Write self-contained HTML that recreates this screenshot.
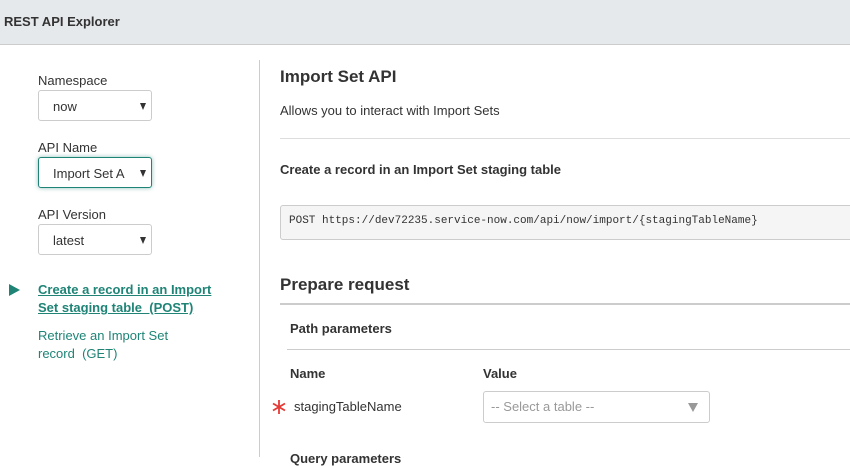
<!DOCTYPE html>
<html><head><meta charset="utf-8"><style>
*{margin:0;padding:0;box-sizing:border-box}
body{width:850px;height:457px;overflow:hidden;background:#fff;font-family:"Liberation Sans",Arial,sans-serif;color:#333;position:relative}
.a{position:absolute;white-space:nowrap}
.hdr{left:0;top:0;width:850px;height:45px;background:#e6e9ec;border-bottom:1px solid #ccc}
.lbl{font-size:13px;color:#333}
.sel{position:absolute;left:38px;width:114px;height:31px;border:1px solid #ccc;border-radius:3px;font-size:13px;padding:8px 0 0 14px;background:#fff}
.sel:after{content:"";position:absolute;right:5px;top:12px;border-left:3.5px solid transparent;border-right:3.5px solid transparent;border-top:7px solid #333}
.lnk{font-size:13px;color:#1f8476;line-height:18px}
</style></head><body>
<div class="a hdr"></div>
<div class="a" style="left:4px;top:14px;font-size:13px;font-weight:bold;color:#333">REST API Explorer</div>

<div class="a lbl" style="left:38px;top:73px">Namespace</div>
<div class="sel" style="top:90px">now</div>
<div class="a lbl" style="left:38px;top:140px">API Name</div>
<div class="sel" style="top:157px;border-color:#1f8476;box-shadow:0 0 4px rgba(31,132,118,.5)">Import Set A</div>
<div class="a lbl" style="left:38px;top:207px">API Version</div>
<div class="sel" style="top:224px">latest</div>

<div class="a" style="left:9px;top:284px;width:0;height:0;border-top:6px solid transparent;border-bottom:6px solid transparent;border-left:11px solid #1f8476"></div>
<div class="a lnk" style="left:38px;top:281px;font-weight:bold;text-decoration:underline">Create a record in an Import<br>Set staging table&nbsp; (POST)</div>
<div class="a lnk" style="left:38px;top:327px">Retrieve an Import Set<br>record&nbsp; (GET)</div>

<div class="a" style="left:259px;top:60px;width:1px;height:397px;background:#ccc"></div>

<div class="a" style="left:280px;top:67px;font-size:17px;font-weight:bold;color:#333">Import Set API</div>
<div class="a" style="left:280px;top:103px;font-size:13px">Allows you to interact with Import Sets</div>
<div class="a" style="left:280px;top:138px;width:570px;height:1px;background:#ddd"></div>
<div class="a" style="left:280px;top:162px;font-size:13px;font-weight:bold">Create a record in an Import Set staging table</div>
<div class="a" style="left:280px;top:205px;width:580px;height:35px;background:#f5f5f5;border:1px solid #ccc;border-radius:3px"></div>
<div class="a" style="left:289px;top:215px;font-family:'Liberation Mono',monospace;font-size:11px;color:#333">POST https://dev72235.service-now.com/api/now/import/{stagingTableName}</div>

<div class="a" style="left:280px;top:275px;font-size:17px;font-weight:bold">Prepare request</div>
<div class="a" style="left:280px;top:303px;width:570px;height:2px;background:#ccc"></div>
<div class="a" style="left:290px;top:321px;font-size:13px;font-weight:bold">Path parameters</div>
<div class="a" style="left:287px;top:349px;width:563px;height:1px;background:#ccc"></div>
<div class="a" style="left:290px;top:366px;font-size:13px;font-weight:bold">Name</div>
<div class="a" style="left:483px;top:366px;font-size:13px;font-weight:bold">Value</div>
<svg class="a" style="left:272px;top:400px" width="14" height="14" viewBox="0 0 14 14"><g stroke="#e53935" stroke-width="1.8"><line x1="7" y1="0" x2="7" y2="14"/><line x1="1" y1="3.5" x2="13" y2="10.5"/><line x1="1" y1="10.5" x2="13" y2="3.5"/></g></svg>
<div class="a" style="left:294px;top:399px;font-size:13px">stagingTableName</div>
<div class="a" style="left:483px;top:391px;width:227px;height:32px;border:1px solid #ccc;border-radius:3px;background:#fff"></div>
<div class="a" style="left:491px;top:399px;font-size:13px;color:#999">-- Select a table --</div>
<div class="a" style="left:688px;top:403px;width:0;height:0;border-left:5px solid transparent;border-right:5px solid transparent;border-top:9px solid #999"></div>
<div class="a" style="left:290px;top:451px;font-size:13px;font-weight:bold">Query parameters</div>
</body></html>
